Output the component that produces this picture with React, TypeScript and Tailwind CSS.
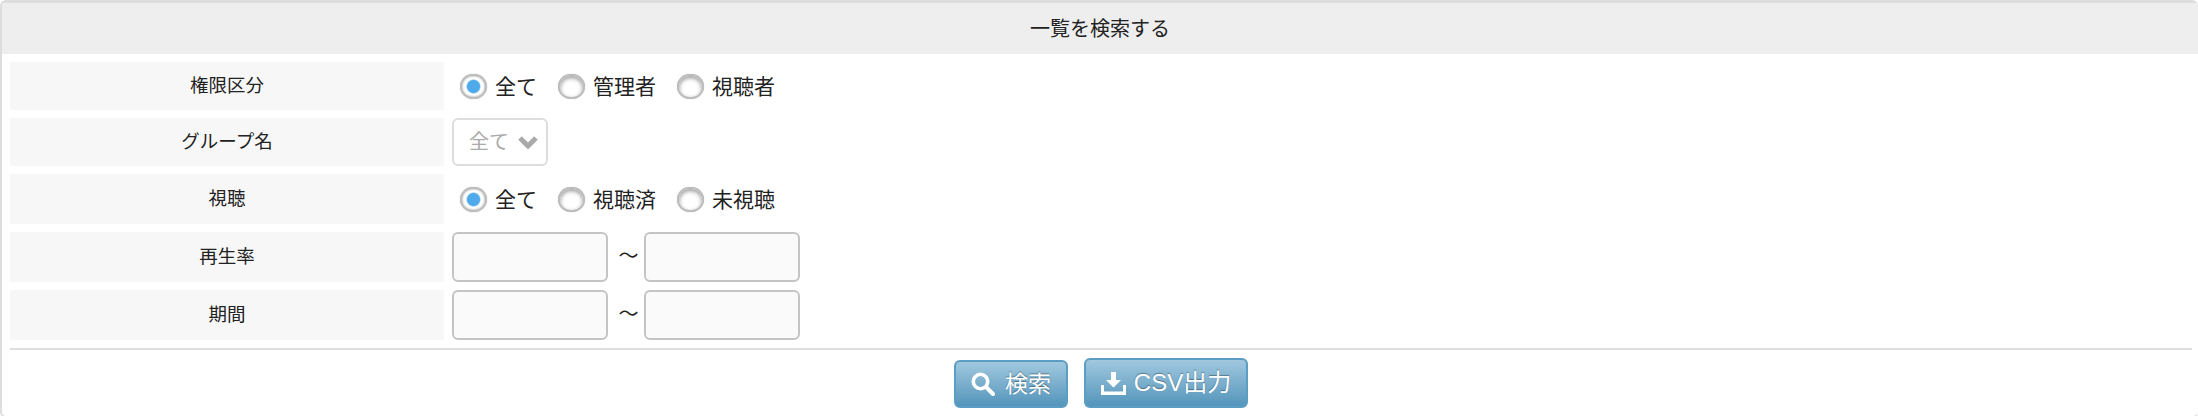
import React from "react";

const font = "font-['Liberation_Sans','Noto_Sans_CJK_JP',sans-serif]";

function Radio({ name, label, checked, left }: { name: string; label: string; checked?: boolean; left: string }) {
  return (
    <label className={`flex items-center ${left}`}>
      <input
        type="radio"
        name={name}
        defaultChecked={checked}
        className="appearance-none w-[27px] h-[25px] rounded-full border-2 border-[#bdbdbd] bg-white shadow-[inset_0_2px_4px_rgba(0,0,0,0.4),0_0_1px_rgba(0,0,0,0.3)] checked:shadow-[inset_0_0_2px_rgba(0,0,0,0.45),0_0_1px_rgba(0,0,0,0.3)] checked:bg-[radial-gradient(circle,#4eaaea_0,#4eaaea_6px,#ffffff_7.5px)]"
      />
      <span className="ml-[8px] mt-[2px] text-[21px] text-[#222]">{label}</span>
    </label>
  );
}

function Row({ label, tall, children }: { label: string; tall?: boolean; children: React.ReactNode }) {
  return (
    <div className={`flex items-stretch ${tall ? "h-[50px]" : "h-[48px]"}`}>
      <div className="w-[434px] shrink-0 bg-[#f7f7f7] flex items-center justify-center text-[18.5px] text-[#222]">
        {label}
      </div>
      <div className="flex items-center pl-[8px]">{children}</div>
    </div>
  );
}

function Range() {
  return (
    <>
      <input
        type="text"
        className="w-[156px] h-[50px] rounded-[6px] border-2 border-[#c4c4c4] bg-[#fafafa] outline-none"
      />
      <span className="w-[36px] pl-[5px] pb-[3px] text-center text-[20px] text-[#222]">～</span>
      <input
        type="text"
        className="w-[156px] h-[50px] rounded-[6px] border-2 border-[#c4c4c4] bg-[#fafafa] outline-none"
      />
    </>
  );
}

function SearchIcon() {
  return (
    <svg width="24" height="24" viewBox="0 0 24 24" fill="none" stroke="#fff" strokeLinecap="round">
      <circle cx="9.5" cy="9.5" r="7.2" strokeWidth="3.6" />
      <path d="M15.5 15.5 L22 22" strokeWidth="4" />
    </svg>
  );
}

function DownloadIcon() {
  return (
    <svg width="25" height="23" viewBox="0 0 25 23" fill="#fff">
      <path d="M10 0h5v8h5l-7.5 7.5L5 8h5z" />
      <path d="M0 13h3v6.5h19V13h3v10H0z" />
    </svg>
  );
}

const btn =
  "flex items-center justify-center rounded-[6px] border-2 border-[#5c9dc3] bg-linear-to-b from-[#a0c8df] to-[#5395bb] text-white [text-shadow:0_-1px_1px_rgba(0,0,0,0.35)]";

export default function App() {
  return (
    <div className="h-[416px] w-[2198px] overflow-hidden bg-white">
      <div className={`${font} h-[418px] w-[2198px] bg-white border-l-2 border-t-[3px] border-b-2 border-[#dddddd] rounded-[6px] flex flex-col`}>
        <div className="h-[51px] shrink-0 bg-[#eeeeee] flex items-center justify-center text-[20px] text-[#222]">
          一覧を検索する
        </div>
        <div className="flex flex-col gap-[8px] pl-[8px] pt-[8px]">
          <Row label="権限区分">
            <Radio name="role" label="全て" checked left="ml-[8px]" />
            <Radio name="role" label="管理者" left="ml-[21px]" />
            <Radio name="role" label="視聴者" left="ml-[21px]" />
          </Row>
          <Row label="グループ名">
            <div className="w-[96px] h-[48px] rounded-[6px] border-2 border-[#dddddd] flex items-center pl-[15px] text-[20px] text-[#aaaaaa]">
              全て
              <svg className="ml-[9px]" width="20" height="14" viewBox="0 0 20 14" fill="none" stroke="#aaaaaa" strokeWidth="5">
                <path d="M2 3 L10 11 L18 3" />
              </svg>
            </div>
          </Row>
          <Row label="視聴" tall>
            <Radio name="view" label="全て" checked left="ml-[8px]" />
            <Radio name="view" label="視聴済" left="ml-[21px]" />
            <Radio name="view" label="未視聴" left="ml-[21px]" />
          </Row>
          <Row label="再生率" tall>
            <Range />
          </Row>
          <Row label="期間" tall>
            <Range />
          </Row>
        </div>
        <div className="ml-[8px] mr-[6px] mt-[8px] h-[2px] bg-[#dddddd]" />
        <div className="flex justify-center items-end gap-[16px] pl-[2px] h-[58px]">
          <button className={`${btn} w-[114px] h-[48px] gap-[10px] text-[23px]`}>
            <SearchIcon />
            検索
          </button>
          <button className={`${btn} w-[164px] h-[50px] gap-[8px] text-[24px]`}>
            <DownloadIcon />
            CSV出力
          </button>
        </div>
      </div>
    </div>
  );
}
